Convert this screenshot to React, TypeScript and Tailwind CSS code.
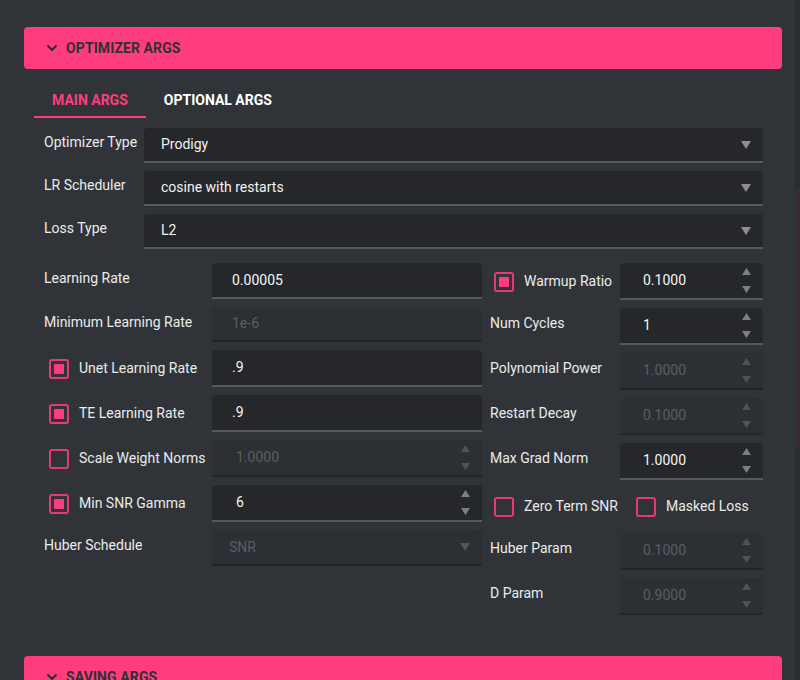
import React from 'react'

const Chevron = () => (
  <svg width="12" height="8" viewBox="0 0 12 8" className="shrink-0">
    <path d="M1.5 1.5 L6 6 L10.5 1.5" fill="none" stroke="#2a2c31" strokeWidth="2" />
  </svg>
)

const SectionHeader = ({ title }: { title: string }) => (
  <div className="flex items-center h-[42px] rounded-[4px] bg-[#ff3d7e] pl-[22px] gap-[8px]">
    <Chevron />
    <span className="text-[14px] font-bold text-[#2e3035] tracking-[0.1px]">{title}</span>
  </div>
)

const Caret = ({ disabled }: { disabled?: boolean }) => (
  <svg width="10" height="8" viewBox="0 0 10 8">
    <path d="M0 0 L10 0 L5 8 Z" fill={disabled ? '#51555a' : '#8e8f91'} />
  </svg>
)

const Spinner = ({ disabled }: { disabled?: boolean }) => {
  const c = disabled ? '#4f5358' : '#7c7f83'
  return (
    <div className="flex flex-col justify-between h-full py-[5px] pr-[12px]">
      <svg width="9" height="7" viewBox="0 0 9 7">
        <path d="M4.5 0 L9 7 L0 7 Z" fill={c} />
      </svg>
      <svg width="9" height="7" viewBox="0 0 9 7">
        <path d="M0 0 L9 0 L4.5 7 Z" fill={c} />
      </svg>
    </div>
  )
}

const Select = ({ value, disabled, className }: { value: string; disabled?: boolean; className?: string }) => (
  <div
    className={
      'flex items-center justify-between rounded-t-[4px] border-b-2 pl-[17px] pr-[12px] text-[14px] ' +
      (disabled
        ? 'bg-[#2c2f33] border-[#232528] text-[#5a5e63] '
        : 'bg-[#25272b] border-[#56595d] text-[#f2f2f2] ') +
      (className ?? '')
    }
  >
    <span>{value}</span>
    <Caret disabled={disabled} />
  </div>
)

const Field = ({
  value,
  disabled,
  spin,
  className,
}: {
  value: string
  disabled?: boolean
  spin?: boolean
  className?: string
}) => (
  <div
    className={
      'flex items-stretch justify-between rounded-t-[4px] border-b-2 text-[14px] ' +
      (spin ? 'pl-[24px] ' : 'pl-[20px] ') +
      (disabled
        ? 'bg-[#2c2f33] border-[#232528] text-[#5a5e63] '
        : 'bg-[#25272b] border-[#56595d] text-[#f5f5f5] ') +
      (className ?? '')
    }
  >
    <span className="self-center">{value}</span>
    {spin && <Spinner disabled={disabled} />}
  </div>
)

const Check = ({ checked }: { checked?: boolean }) => (
  <div className="w-[20px] h-[20px] rounded-[3px] border-2 border-[#e8387a] p-[3px] shrink-0">
    {checked && <div className="w-full h-full bg-[#ff3d7e] rounded-[1px]" />}
  </div>
)

const Label = ({ text, className }: { text: string; className?: string }) => (
  <div className={'pt-[5px] text-[14px] leading-[20px] text-[#ebebeb] shrink-0 ' + (className ?? '')}>{text}</div>
)

const CheckLabel = ({ text, checked, className }: { text: string; checked?: boolean; className?: string }) => (
  <div className={'flex items-center gap-[10px] pl-[5px] text-[14px] text-[#ebebeb] shrink-0 ' + (className ?? '')}>
    <Check checked={checked} />
    <span>{text}</span>
  </div>
)

export default function App() {
  return (
    <div className="flex h-[680px] w-[800px] overflow-hidden bg-[#303438] font-['Roboto',sans-serif]">
      <div className="flex-1 pl-6 pr-[13px] pt-[27px]">
        <SectionHeader title="OPTIMIZER ARGS" />

        {/* tabs */}
        <div className="flex ml-[10px] mt-[16px] h-[33px]">
          <div className="px-[18px] flex items-center border-b-2 border-[#ff3d7e] text-[14px] font-bold text-[#ff3d7e]">
            MAIN ARGS
          </div>
          <div className="px-[18px] flex items-center border-b-2 border-transparent text-[14px] font-bold text-white">
            OPTIONAL ARGS
          </div>
        </div>

        <div className="pl-5 pr-[19px] mt-[10px]">
          {/* top selects */}
          <div className="flex flex-col gap-[8px]">
            {[
              ['Optimizer Type', 'Prodigy'],
              ['LR Scheduler', 'cosine with restarts'],
              ['Loss Type', 'L2'],
            ].map(([l, v]) => (
              <div key={l} className="flex h-[35px]">
                <Label text={l} className="w-[100px] !pt-[4px]" />
                <Select value={v} className="flex-1" />
              </div>
            ))}
          </div>

          {/* two columns */}
          <div className="flex gap-[8px] mt-[14px]">
            <div className="w-[438px] flex flex-col gap-[8px]">
              <div className="flex h-[36px]">
                <Label text="Learning Rate" className="w-[168px]" />
                <Field value="0.00005" className="flex-1" />
              </div>
              <div className="flex h-[35px]">
                <Label text="Minimum Learning Rate" className="w-[168px]" />
                <Field value="1e-6" disabled className="flex-1" />
              </div>
              <div className="flex h-[37px]">
                <CheckLabel text="Unet Learning Rate" checked className="w-[168px]" />
                <Field value=".9" className="flex-1" />
              </div>
              <div className="flex h-[37px]">
                <CheckLabel text="TE Learning Rate" checked className="w-[168px]" />
                <Field value=".9" className="flex-1" />
              </div>
              <div className="flex h-[37px]">
                <CheckLabel text="Scale Weight Norms" className="w-[168px]" />
                <Field value="1.0000" spin disabled className="flex-1" />
              </div>
              <div className="flex h-[37px]">
                <CheckLabel text="Min SNR Gamma" checked className="w-[168px]" />
                <Field value="6" spin className="flex-1" />
              </div>
              <div className="flex h-[36px]">
                <Label text="Huber Schedule" className="w-[168px]" />
                <Select value="SNR" disabled className="flex-1" />
              </div>
            </div>

            <div className="flex-1 flex flex-col gap-[8px]">
              <div className="flex h-[37px]">
                <CheckLabel text="Warmup Ratio" checked className="w-[130px] !pl-[4px]" />
                <Field value="0.1000" spin className="flex-1 !pl-[23px]" />
              </div>
              <div className="flex h-[37px]">
                <Label text="Num Cycles" className="w-[130px]" />
                <Field value="1" spin className="flex-1 !pl-[23px]" />
              </div>
              <div className="flex h-[37px]">
                <Label text="Polynomial Power" className="w-[130px]" />
                <Field value="1.0000" spin disabled className="flex-1 !pl-[23px]" />
              </div>
              <div className="flex h-[37px]">
                <Label text="Restart Decay" className="w-[130px]" />
                <Field value="0.1000" spin disabled className="flex-1 !pl-[23px]" />
              </div>
              <div className="flex h-[37px]">
                <Label text="Max Grad Norm" className="w-[130px]" />
                <Field value="1.0000" spin className="flex-1 !pl-[23px]" />
              </div>
              <div className="flex h-[37px] items-center">
                <CheckLabel text="Zero Term SNR" className="w-[141px] !pl-[4px]" />
                <CheckLabel text="Masked Loss" />
              </div>
              <div className="flex h-[37px]">
                <Label text="Huber Param" className="w-[130px]" />
                <Field value="0.1000" spin disabled className="flex-1 !pl-[23px]" />
              </div>
              <div className="flex h-[37px]">
                <Label text="D Param" className="w-[130px]" />
                <Field value="0.9000" spin disabled className="flex-1 !pl-[23px]" />
              </div>
            </div>
          </div>
        </div>

        <div className="mt-[41px]">
          <SectionHeader title="SAVING ARGS" />
        </div>
      </div>

      {/* scrollbar */}
      <div className="w-[5px] h-full bg-[#292c30] flex flex-col">
        <div className="mt-[188px] h-[260px] bg-[#3b2b35]" />
      </div>
    </div>
  )
}
